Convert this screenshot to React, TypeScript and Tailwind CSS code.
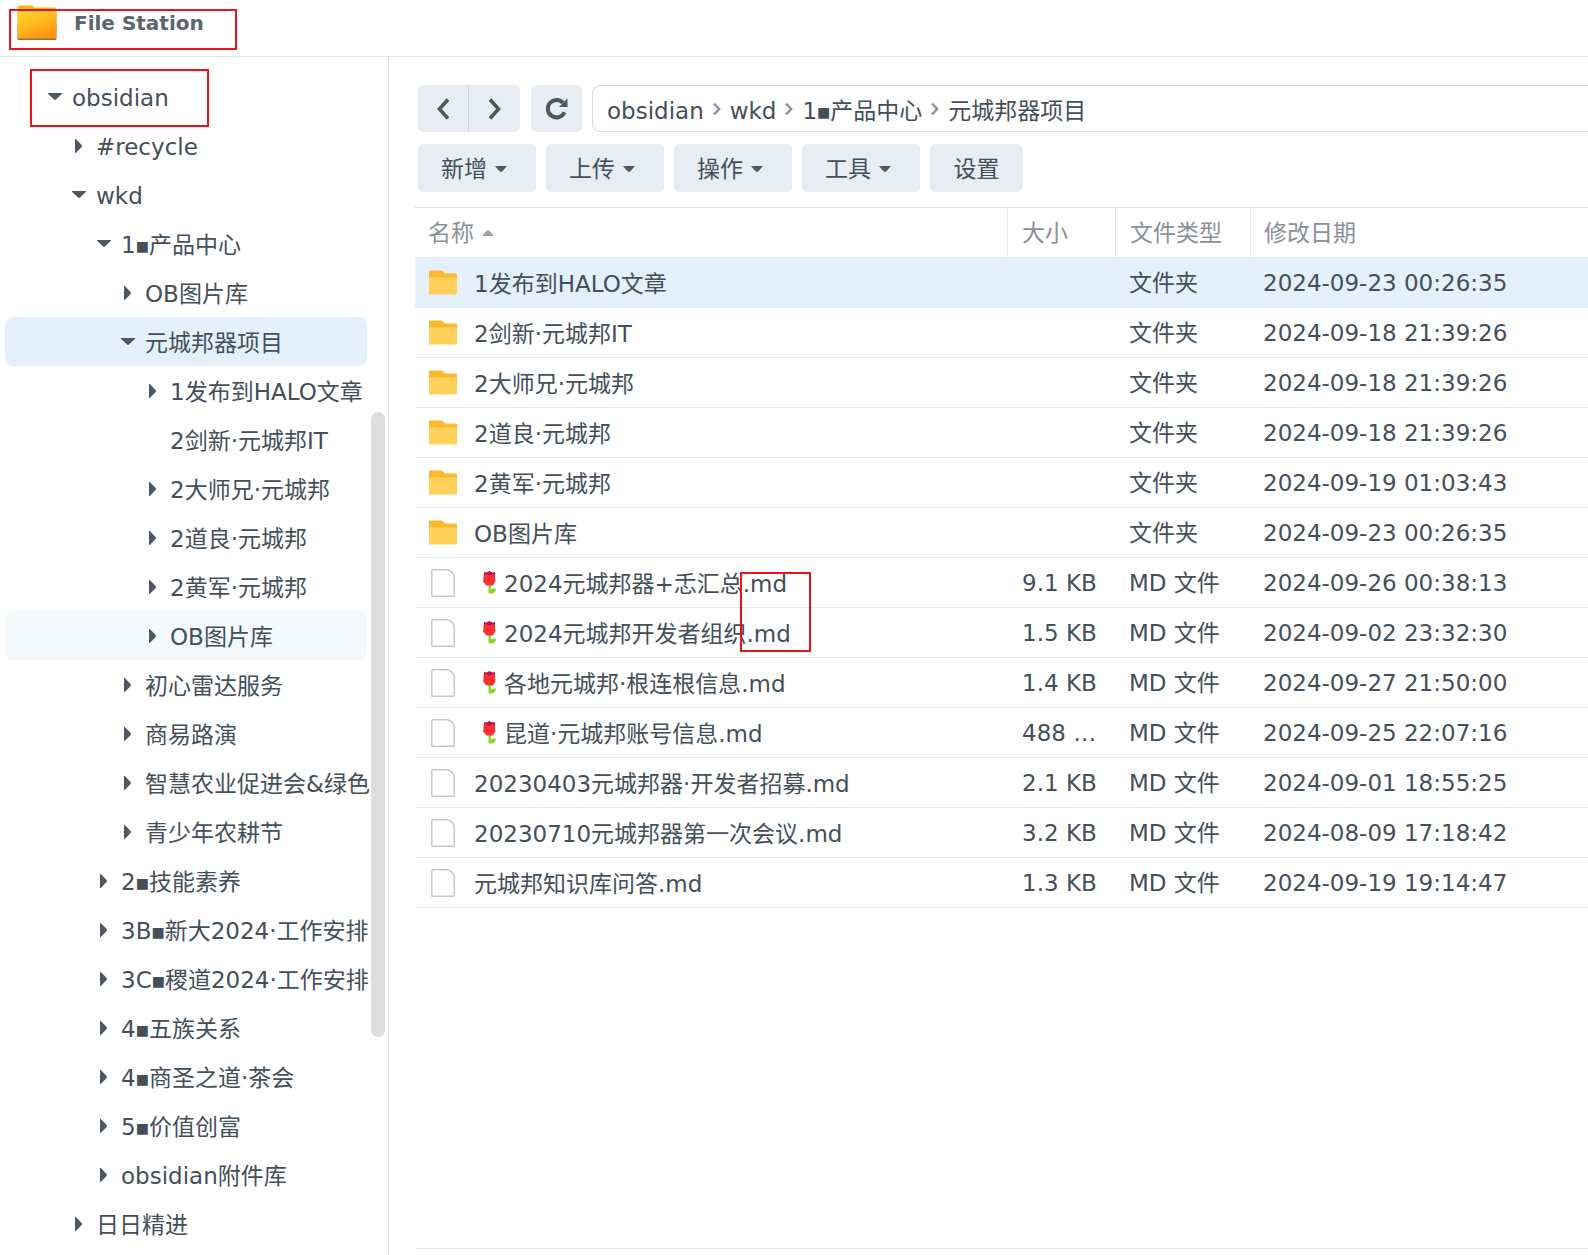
import { Fragment, ReactNode } from 'react';
import { clsx } from 'clsx';

type TreeNode = {
  label: string;
  level: number;
  state?: 'open' | 'closed' | 'leaf';
  highlight?: 'selected' | 'hover';
};

type FileRow = {
  name: string;
  kind: 'folder' | 'file';
  tulip?: boolean;
  size?: string;
  modified: string;
};

const TREE: TreeNode[] = [
  { label: 'obsidian', level: 0, state: 'open' },
  { label: '#recycle', level: 1 },
  { label: 'wkd', level: 1, state: 'open' },
  { label: '1■产品中心', level: 2, state: 'open' },
  { label: 'OB图片库', level: 3 },
  { label: '元城邦器项目', level: 3, state: 'open', highlight: 'selected' },
  { label: '1发布到HALO文章', level: 4 },
  { label: '2剑新·元城邦IT', level: 4, state: 'leaf' },
  { label: '2大师兄·元城邦', level: 4 },
  { label: '2道良·元城邦', level: 4 },
  { label: '2黄军·元城邦', level: 4 },
  { label: 'OB图片库', level: 4, highlight: 'hover' },
  { label: '初心雷达服务', level: 3 },
  { label: '商易路演', level: 3 },
  { label: '智慧农业促进会&绿色', level: 3 },
  { label: '青少年农耕节', level: 3 },
  { label: '2■技能素养', level: 2 },
  { label: '3B■新大2024·工作安排', level: 2 },
  { label: '3C■稷道2024·工作安排', level: 2 },
  { label: '4■五族关系', level: 2 },
  { label: '4■商圣之道·茶会', level: 2 },
  { label: '5■价值创富', level: 2 },
  { label: 'obsidian附件库', level: 2 },
  { label: '日日精进', level: 1 },
];

const FILES: FileRow[] = [
  { name: '1发布到HALO文章', kind: 'folder', modified: '2024-09-23 00:26:35' },
  { name: '2剑新·元城邦IT', kind: 'folder', modified: '2024-09-18 21:39:26' },
  { name: '2大师兄·元城邦', kind: 'folder', modified: '2024-09-18 21:39:26' },
  { name: '2道良·元城邦', kind: 'folder', modified: '2024-09-18 21:39:26' },
  { name: '2黄军·元城邦', kind: 'folder', modified: '2024-09-19 01:03:43' },
  { name: 'OB图片库', kind: 'folder', modified: '2024-09-23 00:26:35' },
  { name: '2024元城邦器+忎汇总.md', kind: 'file', tulip: true, size: '9.1 KB', modified: '2024-09-26 00:38:13' },
  { name: '2024元城邦开发者组织.md', kind: 'file', tulip: true, size: '1.5 KB', modified: '2024-09-02 23:32:30' },
  { name: '各地元城邦·根连根信息.md', kind: 'file', tulip: true, size: '1.4 KB', modified: '2024-09-27 21:50:00' },
  { name: '昆道·元城邦账号信息.md', kind: 'file', tulip: true, size: '488 …', modified: '2024-09-25 22:07:16' },
  { name: '20230403元城邦器·开发者招募.md', kind: 'file', size: '2.1 KB', modified: '2024-09-01 18:55:25' },
  { name: '20230710元城邦器第一次会议.md', kind: 'file', size: '3.2 KB', modified: '2024-08-09 17:18:42' },
  { name: '元城邦知识库问答.md', kind: 'file', size: '1.3 KB', modified: '2024-09-19 19:14:47' },
];

const PATH = ['obsidian', 'wkd', '1■产品中心', '元城邦器项目'];

const MENUS = ['新增', '上传', '操作', '工具'];

const INDENT = ['pl-[37px]', 'pl-[61px]', 'pl-[86px]', 'pl-[110px]', 'pl-[135px]'];

export default function App() {
  return (
    <div className="relative flex min-h-screen flex-col overflow-hidden bg-white font-['DejaVu_Sans','Noto_Sans_CJK_SC',sans-serif] text-[23px] leading-8 text-[#444f5a]">
      <header className="flex h-[57px] shrink-0 items-start gap-4 border-b border-[#dfe6ef] pt-1 pl-4">
        <AppFolderIcon />
        <h1 className="pt-[7px] text-xl leading-6 font-bold text-[#5a656f]">File Station</h1>
      </header>
      <div className="flex flex-1">
        <Sidebar />
        <main className="flex min-w-0 flex-1 flex-col pt-7">
          <NavigationBar />
          <Toolbar />
          <FileTable />
          <div className="mt-auto mb-1.5 ml-[26px] border-t border-[#e6eaf1]" />
        </main>
      </div>
      <Marker className="top-[9px] left-[9px] h-[41px] w-[228px]" />
      <Marker className="top-[69px] left-[30px] h-[58px] w-[179px]" />
      <Marker className="top-[572px] left-[740px] h-20 w-[71px]" />
    </div>
  );
}

function Sidebar() {
  return (
    <aside className="flex w-[389px] shrink-0 gap-1 border-r border-[#dfe6ef] pt-[15px] pr-[3px] pl-[5px]">
      <ul className="min-w-0 flex-1">
        {TREE.map((node, i) => (
          <li key={i}>
            <button
              type="button"
              className={clsx(
                'flex h-[49px] w-full items-center rounded-lg whitespace-nowrap',
                INDENT[node.level],
                node.highlight === 'selected' && 'bg-[#e4f1fd]',
                node.highlight === 'hover' && 'bg-[#f4f9fe]'
              )}
            >
              <span className="mr-1 flex w-[26px] shrink-0 justify-center">
                {node.state === 'open' && <ArrowDown />}
                {!node.state && <ArrowRight />}
              </span>
              <Label text={node.label} className="pt-0.5" />
            </button>
          </li>
        ))}
      </ul>
      <div className="w-3.5 shrink-0">
        <div className="mt-[340px] h-[625px] rounded-full bg-[#dedede]" />
      </div>
    </aside>
  );
}

function NavigationBar() {
  return (
    <div className="flex h-[47px] pl-[29px]">
      <button
        type="button"
        aria-label="Back"
        className="flex w-[51px] items-center justify-center rounded-l-md border-r border-[#cbd6e2] bg-[#e8edf4]"
      >
        <svg width="14" height="24" viewBox="0 0 14 24" fill="none" stroke="#4d5863" strokeWidth="3.600">
          <path d="M12 2.500 3.500 12 12 21.500" />
        </svg>
      </button>
      <button
        type="button"
        aria-label="Forward"
        className="flex w-[51px] items-center justify-center rounded-r-md bg-[#e8edf4]"
      >
        <svg width="14" height="24" viewBox="0 0 14 24" fill="none" stroke="#4d5863" strokeWidth="3.600">
          <path d="M2 2.500 10.500 12 2 21.500" />
        </svg>
      </button>
      <button
        type="button"
        aria-label="Refresh"
        className="ml-[11px] flex w-[51px] items-center justify-center rounded-md bg-[#e8edf4]"
      >
        <svg width="22" height="22" viewBox="0 0 22 22">
          <path d="M18.500 14.200A8.700 8.700 0 1 1 17 4.800" fill="none" stroke="#4d5863" strokeWidth="4" />
          <path d="M21.500.5V9H13z" fill="#4d5863" />
        </svg>
      </button>
      <nav className="ml-2.5 flex min-w-0 flex-1 items-center gap-[9px] rounded-l-lg border-y border-l border-[#d3dfea] pt-1 pl-3.5 whitespace-nowrap">
        {PATH.map((part, i) => (
          <Fragment key={part}>
            {i > 0 && (
              <svg width="8" height="14" viewBox="0 0 8 14" fill="none" stroke="#8391a1" strokeWidth="2.400" className="mb-1">
                <path d="M1 1.500 6.200 7 1 12.500" />
              </svg>
            )}
            <a href="#">
              <Label text={part} />
            </a>
          </Fragment>
        ))}
      </nav>
    </div>
  );
}

function Toolbar() {
  return (
    <div className="mt-3 flex h-12 gap-2.5 pl-[29px]">
      {MENUS.map((menu) => (
        <ToolbarButton key={menu} className="w-[118px] gap-2 pr-1.5">
          {menu}
          <svg width="12" height="6" viewBox="0 0 12 6" fill="#4d5863">
            <path d="M.5 0h11v.8L7 5.500Q6 6.300 5 5.500L.5.8z" />
          </svg>
        </ToolbarButton>
      ))}
      <ToolbarButton className="w-[93px]">设置</ToolbarButton>
    </div>
  );
}

function ToolbarButton({ className, children }: { className: string; children: ReactNode }) {
  return (
    <button
      type="button"
      className={clsx('flex items-center justify-center rounded-md bg-[#e8edf4] pt-0.5 whitespace-nowrap', className)}
    >
      {children}
    </button>
  );
}

function FileTable() {
  return (
    <div className="mt-[15px] ml-[26px] border-t border-[#d3dfea]">
      <table className="w-full table-fixed border-separate border-spacing-0 text-left whitespace-nowrap">
        <colgroup>
          <col className="w-[593px]" />
          <col className="w-[108px]" />
          <col className="w-[135px]" />
          <col />
        </colgroup>
        <thead>
          <tr className="h-[50px] text-[#8b9096]">
            <th className="border-r border-b border-[#e6eaf1] p-0 pl-[13px] font-normal">
              <span className="flex items-center gap-2">
                名称
                <svg width="12" height="6" viewBox="0 0 12 6" fill="#9aa1a9">
                  <path d="M.5 6v-.8L5 .6Q6-.2 7 .6l4.500 4.600V6z" />
                </svg>
              </span>
            </th>
            <th className="border-r border-b border-[#e6eaf1] p-0 pl-3.5 font-normal">大小</th>
            <th className="border-r border-b border-[#e6eaf1] p-0 pl-3.5 font-normal">文件类型</th>
            <th className="border-b border-[#e6eaf1] p-0 pl-[13px] font-normal">修改日期</th>
          </tr>
        </thead>
        <tbody>
          {FILES.map((file, i) => (
            <tr key={file.name} className={clsx('h-[50px]', i === 0 && 'bg-[#e4f1fd]')}>
              <td className="border-b border-[#e6eaf1] p-0 pl-[13px]">
                <div className="flex items-center">
                  <span className="mr-4 flex w-[30px] justify-center">
                    {file.kind === 'folder' ? <FolderIcon /> : <FileIcon />}
                  </span>
                  {file.tulip && <Tulip />}
                  <span className="pt-0.5">{file.name}</span>
                </div>
              </td>
              <td className="border-b border-[#e6eaf1] p-0 pl-3.5">{file.size}</td>
              <td className="border-b border-[#e6eaf1] p-0 pl-[13px]">
                {file.kind === 'folder' ? '文件夹' : 'MD 文件'}
              </td>
              <td className="border-b border-[#e6eaf1] p-0 pl-3">{file.modified}</td>
            </tr>
          ))}
        </tbody>
      </table>
    </div>
  );
}

// The square is used as a separator in folder names and is drawn smaller than the rest
function Label({ text, className }: { text: string; className?: string }) {
  const [before, after] = text.split('■');

  return (
    <span className={className}>
      {before}
      {after && <span className="align-[2px] text-sm leading-none">■</span>}
      {after}
    </span>
  );
}

function Marker({ className }: { className: string }) {
  return <div className={clsx('pointer-events-none absolute border-2 border-[#ec1218]', className)} />;
}

function ArrowDown() {
  return (
    <svg width="14" height="8" viewBox="0 0 14 8" fill="#4d5863">
      <path d="M0 0h14v.8L8 6.600Q7 7.400 6 6.600L0 .8z" />
    </svg>
  );
}

function ArrowRight() {
  return (
    <svg width="8" height="14" viewBox="0 0 8 14" fill="#4d5863">
      <path d="M0 0h.8l5.800 6Q7.400 7 6.600 8L.8 14H0z" />
    </svg>
  );
}

function FolderIcon() {
  return (
    <svg width="28" height="25" viewBox="0 0 28 25">
      <path d="M0 1.500Q0 .5 1 .5H12.500Q14 .5 14.800 2L15.700 3.500H27Q28 3.500 28 4.500V12H0z" fill="#fdb92e" />
      <path d="M0 7.500H28V23.500Q28 24.500 27 24.500H1Q0 24.500 0 23.500z" fill="#ffd05a" />
    </svg>
  );
}

function FileIcon() {
  return (
    <svg width="24" height="28" viewBox="0 0 24 28">
      <path
        d="M1.500 .75H16.500Q21.500 2 23.250 7V26.500Q23.250 27.250 22.500 27.250H1.500Q.75 27.250 .75 26.500V1.500Q.75 .75 1.500 .75z"
        fill="#fff"
        stroke="#c6c9cd"
        strokeWidth="1.500"
      />
    </svg>
  );
}

function Tulip() {
  return (
    <svg width="30" height="24" viewBox="0 0 30 24" className="shrink-0">
      <path d="M14.500 13h2.500v5.500q2-1.500 5-1-.5 4.500-4 5h-2.500q-1 0-1-1z" fill="#86d62c" />
      <path d="M10 1l2.500.5L15.500 0l3 1.500L21 1v7H10z" fill="#c3114c" />
      <path d="M9.500 4l3-1 3 2 3-2 2.500 1v3l.5 3-2.500 4.500h-6.500L9 10.500l.5-3z" fill="#fb3030" />
    </svg>
  );
}

function AppFolderIcon() {
  return (
    <svg width="42" height="38" viewBox="0 0 42 38" className="shrink-0">
      <defs>
        <linearGradient id="folder-front" x1="0" y1="0" x2=".6" y2="1">
          <stop offset="0" stopColor="#ffd52e" />
          <stop offset=".5" stopColor="#ffb91f" />
          <stop offset="1" stopColor="#ff9412" />
        </linearGradient>
      </defs>
      <path d="M2 3.500Q2 1.500 4 1.500H16Q17.500 1.500 18 3.500H38Q40 3.500 40 5.500V16H2z" fill="#f9b516" />
      <path d="M5 6.500H39V14H5z" fill="#9fc49a" />
      <path d="M1.500 20H40.500V34.500Q40.500 36 39 36H3Q1.500 36 1.500 34.500z" fill="#8d7448" />
      <path d="M1 9.500Q1 8 2.500 8H39.500Q41 8 41 9.500L40 33Q40 34.500 38.500 34.500H3.500Q2 34.500 2 33z" fill="url(#folder-front)" />
    </svg>
  );
}
